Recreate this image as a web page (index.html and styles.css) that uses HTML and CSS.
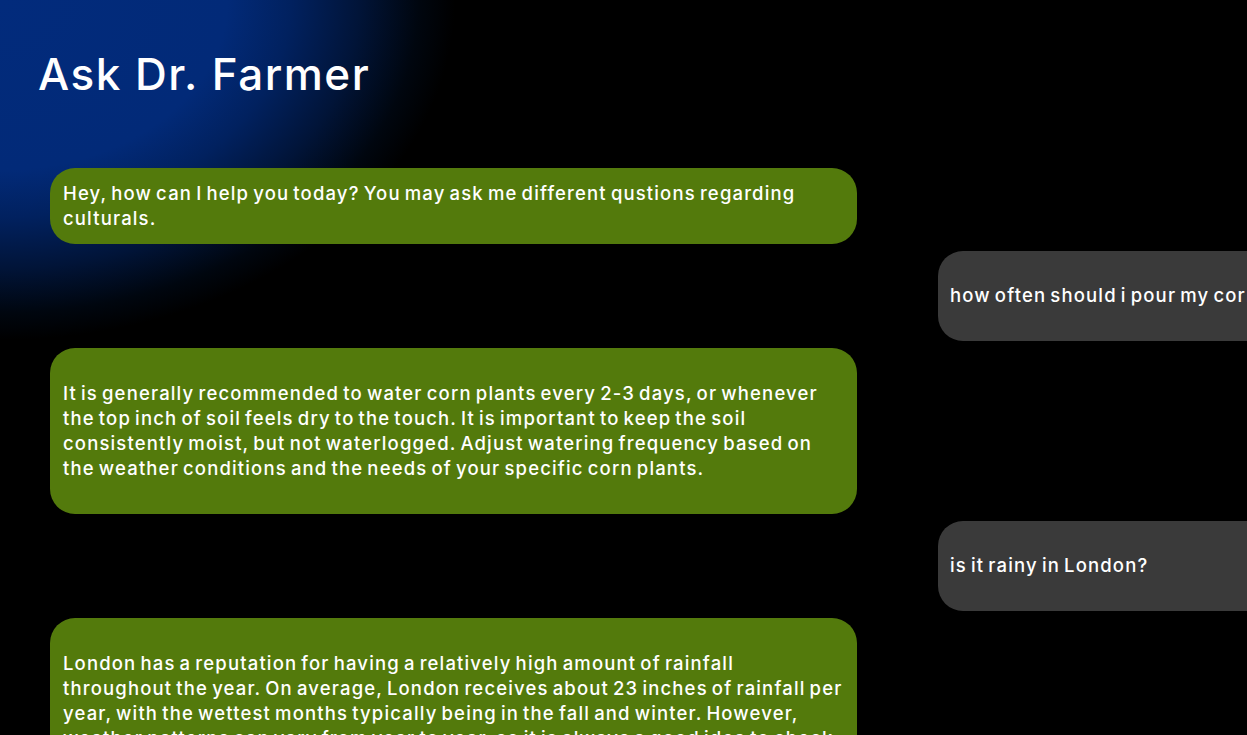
FILE: index.html
```html
<!DOCTYPE html>
<html lang="en">
<head>
<meta charset="utf-8">
<title>Ask Dr. Farmer</title>
<link rel="stylesheet" href="styles.css">
</head>
<body>
<div class="page">
  <header class="header">
    <h1 class="title">Ask Dr. Farmer</h1>
  </header>
  <main class="chat">
    <div class="msg bot intro">Hey, how can I help you today? You may ask me different qustions regarding culturals.</div>
    <div class="msg user"><p class="msg-text">how often should i pour my corn plants?</p></div>
    <div class="msg bot"><p class="msg-text">It is generally recommended to water corn plants every 2-3 days, or whenever the top inch of soil feels dry to the touch. It is important to keep the soil consistently moist, but not waterlogged. Adjust watering frequency based on the weather conditions and the needs of your specific corn plants.</p></div>
    <div class="msg user"><p class="msg-text">is it rainy in London?</p></div>
    <div class="msg bot"><p class="msg-text">London has a reputation for having a relatively high amount of rainfall throughout the year. On average, London receives about 23 inches of rainfall per year, with the wettest months typically being in the fall and winter. However, weather patterns can vary from year to year, so it is always a good idea to check the local forecast for the most up-to-date information.</p></div>
  </main>
</div>
</body>
</html>
```

FILE: styles.css
```css
html, body {
  margin: 0;
  padding: 0;
  background: #000;
  overflow: hidden;
}

.page {
  min-height: 735px;
  background:
    radial-gradient(ellipse 455px 340px at 0px 0px, #022b7c 0%, #022a78 50%, #01215f 64%, #011438 79%, #00060f 92%, #000 100%),
    #000;
  background-repeat: no-repeat;
  font-family: "Inter", "DejaVu Sans", sans-serif;
  color: #fff;
}

.header {
  padding: 50px 0 0 38px;
  height: 168px;
  box-sizing: border-box;
}

.title {
  margin: 0;
  font-family: "Inter", sans-serif;
  font-weight: 500;
  font-size: 44px;
  line-height: 48px;
  letter-spacing: 1.5px;
  color: #fff;
}

.chat {
  display: flex;
  flex-direction: column;
  gap: 7px;
  padding: 0 0 0 50px;
}

.msg {
  box-sizing: border-box;
  width: 807px;
  border-radius: 25px;
  padding: 13px 11px 13px 13px;
  font-size: 18.5px;
  font-weight: 500;
  line-height: 25px;
  letter-spacing: 1.15px;
  word-spacing: -2px;
  color: #fff;
  flex-shrink: 0;
}

.bot {
  background: #537a0c;
}

.user {
  background: #3a3a3a;
  margin-left: 888px;
  width: 500px;
  padding: 12px 12px 13px;
  white-space: nowrap;
}

.msg-text {
  margin: 20px 0;
}
```
